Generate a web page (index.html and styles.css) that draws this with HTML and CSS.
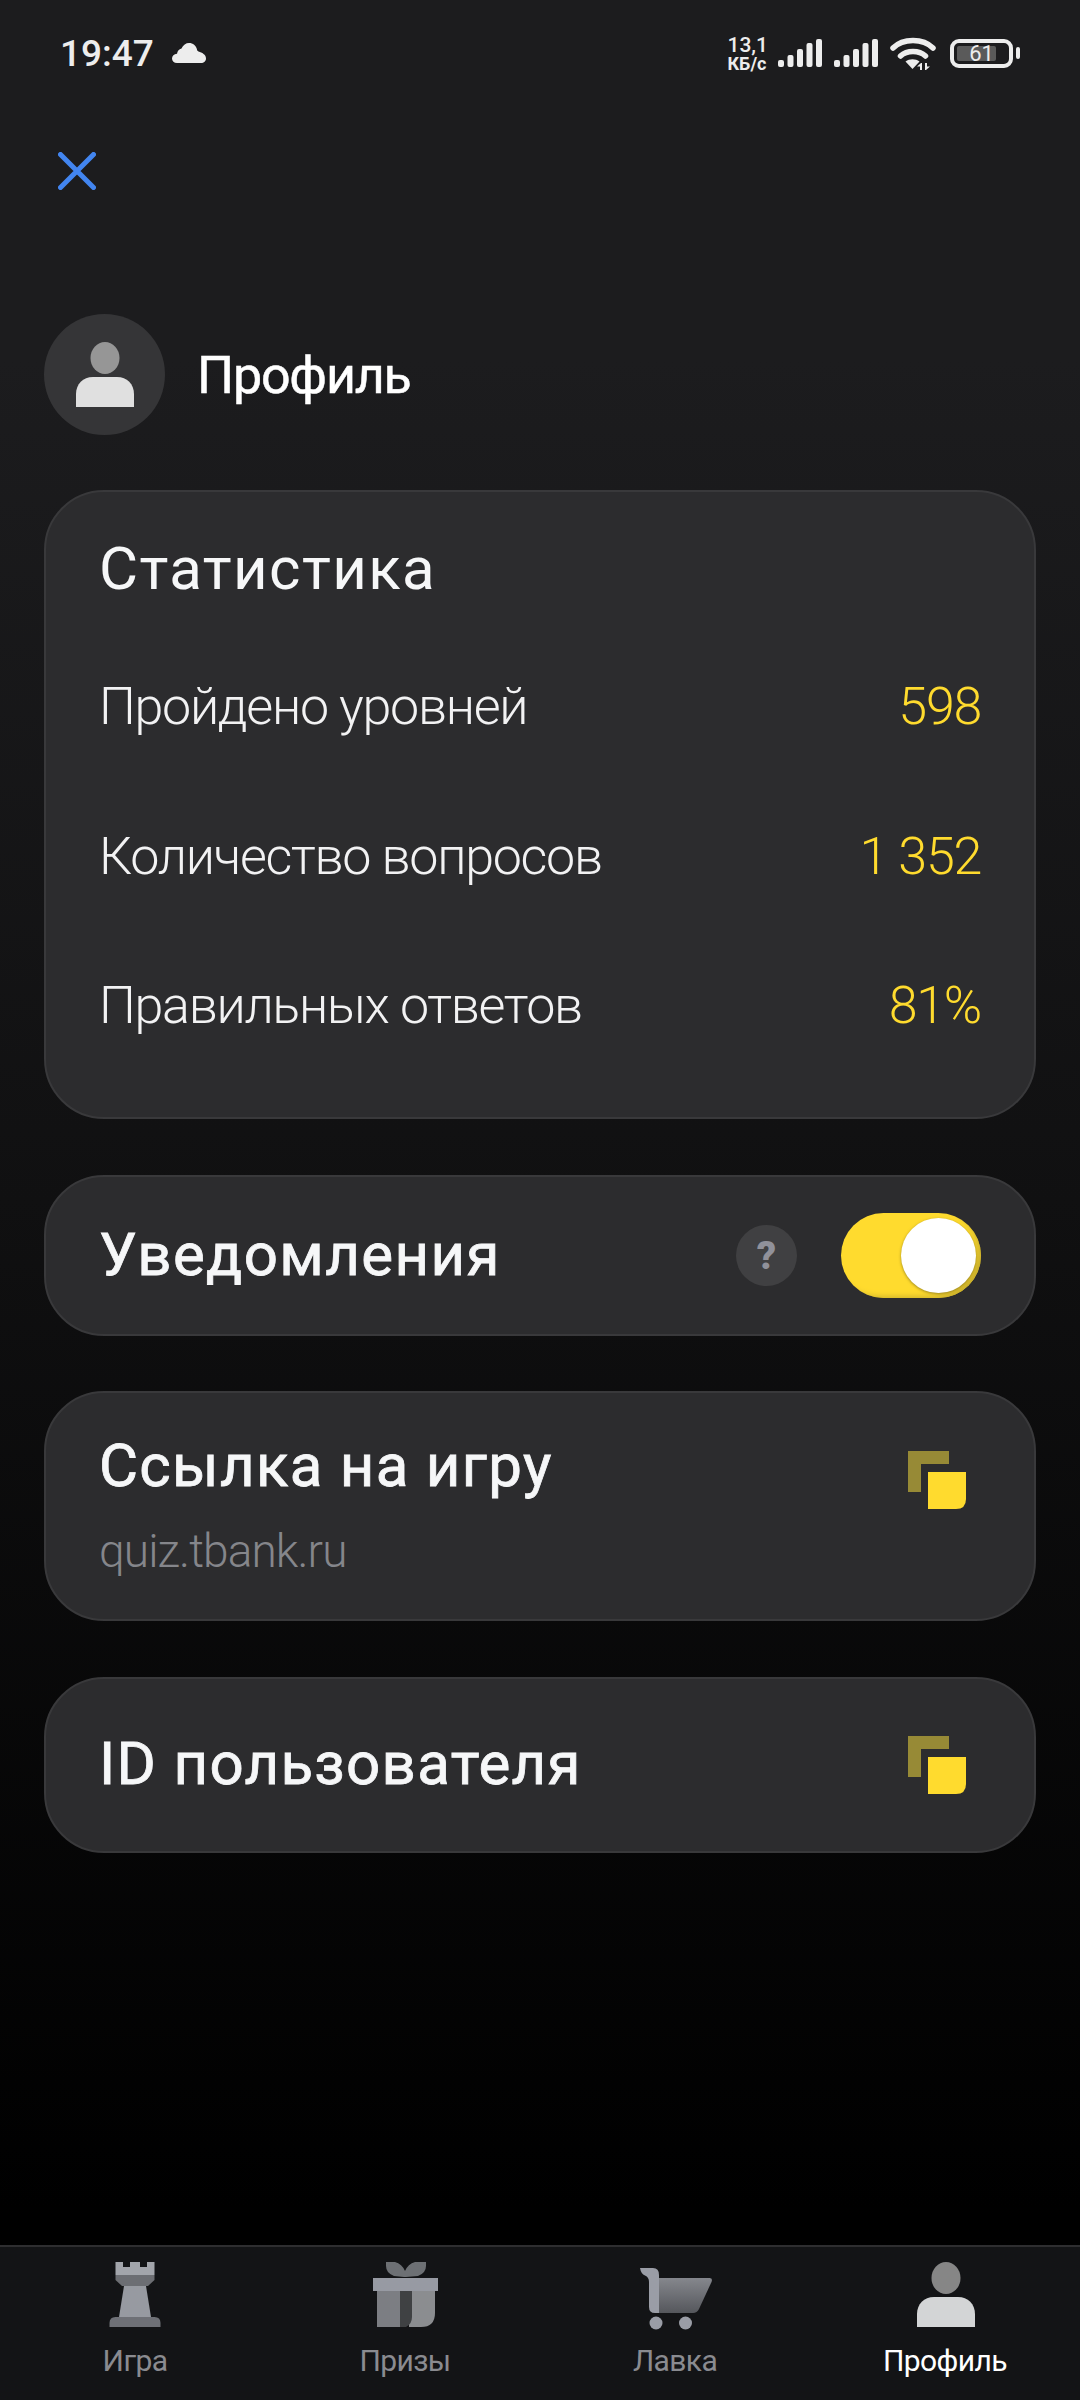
FILE: index.html
```html
<!DOCTYPE html>
<html lang="ru">
<head>
    <meta charset="UTF-8">
    <meta name="viewport" content="width=device-width, initial-scale=1.0">
    <title>Профиль</title>
    <link rel="stylesheet" href="styles.css">
</head>
<body>
    <div class="status-bar">
        <div class="status-left">
            <span class="status-time">19:47</span>
            <svg class="cloud" width="34" height="20" viewBox="0 0 34 20"><path d="M5 20C2 20 0 18 0 15.500c0-2.500 2-4.500 5-4.700C5.500 8 7 6 9.500 5.500 11 2 14 0 17 0c4 0 7 2.500 8 6.500 .2 1 .5 1.500 1.500 2C30 9.500 34 11.500 34 15.500c0 2.500-2 4.500-5 4.500z" fill="#ededed"/></svg>
        </div>
        <div class="status-right">
            <div class="net-speed"><span class="net-value">13,1</span><span class="net-unit">КБ/с</span></div>
            <svg class="signal" width="44" height="28" viewBox="0 0 44 28"><g fill="#ededed"><rect x="0" y="21" width="6" height="7" rx="2"/><rect x="9.500" y="16" width="6" height="12" rx="2"/><rect x="19" y="10" width="6" height="18" rx="2"/><rect x="28.500" y="4" width="6" height="24" rx="2"/><rect x="38" y="0" width="6" height="28" rx="2"/></g></svg>
            <svg class="signal" width="44" height="28" viewBox="0 0 44 28"><g fill="#ededed"><rect x="0" y="21" width="6" height="7" rx="2"/><rect x="9.500" y="16" width="6" height="12" rx="2"/><rect x="19" y="10" width="6" height="18" rx="2"/><rect x="28.500" y="4" width="6" height="24" rx="2"/><rect x="38" y="0" width="6" height="28" rx="2"/></g></svg>
            <svg class="wifi" width="46" height="33" viewBox="0 0 46 33"><g fill="none" stroke="#ededed" stroke-width="5.500" stroke-linecap="round"><path d="M3 11C13 1 33 1 43 11"/><path d="M10.500 19C17 13 29 13 35.500 19"/></g><path d="M15.500 24.500c4-3 10-3 14 0L22.500 32z" fill="#ededed"/><path d="M31 26l-4 3.500h3V33h2v-7zM36 33l4-3.500h-3V26h-2v7z" fill="#ededed"/></svg>
            <div class="battery">
                <div class="battery-body">
                    <div class="battery-fill"></div>
                    <span class="battery-num">61</span>
                </div>
                <div class="battery-nub"></div>
            </div>
        </div>
    </div>

    <main class="content">
        <svg class="close-icon" width="38" height="38" viewBox="0 0 38 38"><path d="M2.500 2.500L35.500 35.500M35.500 2.500L2.500 35.500" stroke="#4285f0" stroke-width="5" stroke-linecap="round"/></svg>

        <div class="profile-head">
            <div class="avatar">
                <svg width="58" height="65" viewBox="0 0 58 65"><ellipse cx="29" cy="16" rx="14.500" ry="16" fill="#969696"/><path d="M0 65V52C0 42 7 35 17 35H41C51 35 58 42 58 52V65z" fill="#e0e0e0"/></svg>
            </div>
            <span class="profile-name">Профиль</span>
        </div>

        <section class="card stats-card">
            <h2 class="card-title">Статистика</h2>
            <div class="stat-row"><span>Пройдено уровней</span><span class="stat-value">598</span></div>
            <div class="stat-row"><span>Количество вопросов</span><span class="stat-value">1 352</span></div>
            <div class="stat-row"><span>Правильных ответов</span><span class="stat-value">81%</span></div>
        </section>

        <section class="card notify-card">
            <h2 class="card-title notify-title">Уведомления</h2>
            <div class="help-badge">?</div>
            <div class="toggle"><div class="toggle-knob"></div></div>
        </section>

        <section class="card link-card">
            <div>
                <h2 class="card-title">Ссылка на игру</h2>
                <div class="link-text">quiz.tbank.ru</div>
            </div>
            <svg class="copy-icon" width="58" height="58" viewBox="0 0 58 58"><path d="M0 0H41V13H13V41H0z" fill="#978a36"/><path d="M20 21H58V48Q58 58 48 58H20z" fill="#ffdb2e"/></svg>
        </section>

        <section class="card id-card">
            <h2 class="card-title">ID пользователя</h2>
            <svg class="copy-icon" width="58" height="58" viewBox="0 0 58 58"><path d="M0 0H41V13H13V41H0z" fill="#978a36"/><path d="M20 21H58V48Q58 58 48 58H20z" fill="#ffdb2e"/></svg>
        </section>
    </main>

    <nav class="tabbar">
        <div class="tab">
            <svg width="72" height="66" viewBox="0 0 72 66">
                <path d="M16.500 0H24V5H31V0H41V5H48V0H55.500V13H16.500z" fill="#a2a5ab"/>
                <path d="M16.500 13H55.500V18L49 24H23L16.500 18z" fill="#6c6e73"/>
                <path d="M25 24H47L52 55H20z" fill="#979aa1"/>
                <path d="M10.500 65V61Q10.500 55 16.500 55H55.500Q61.500 55 61.500 61V65z" fill="#6e7076"/>
            </svg>
            <span class="tab-label">Игра</span>
        </div>
        <div class="tab">
            <svg width="72" height="66" viewBox="0 0 72 66">
                <path d="M17 0H26Q33 2 36 9 39 2 46 0H57V4Q57 11 49 14L37 15 35 15 25 14Q17 11 17 4z" fill="#6d7074"/>
                <rect x="4" y="16" width="65" height="13" fill="#979aa3"/>
                <rect x="8" y="29" width="26" height="36" fill="#7c7e83"/>
                <path d="M40 29H66V51Q66 65 52 65H40z" fill="#8b8d90"/>
                <path d="M31 29H43V55Q43 62 37 65H31z" fill="#3f4143"/>
            </svg>
            <span class="tab-label">Призы</span>
        </div>
        <div class="tab">
            <svg class="cart" width="74" height="66" viewBox="0 0 74 66">
                <defs><linearGradient id="cartFill" x1="0" y1="0" x2="0" y2="1"><stop offset="0" stop-color="#85878d"/><stop offset="1" stop-color="#55575c"/></linearGradient></defs>
                <path d="M20 16H71.500Q75 16 73.500 20L61 47Q59 51 55 51H20z" fill="url(#cartFill)"/>
                <path d="M2 6H15Q21 6 21 13V51H17Q11 51 11 45V20Q11 15 7 13.500 3 12 2 6z" fill="#9a9da6"/>
                <circle cx="18" cy="61" r="6.500" fill="#9a9da6"/>
                <circle cx="47.500" cy="61" r="6.500" fill="#9a9da6"/>
            </svg>
            <span class="tab-label">Лавка</span>
        </div>
        <div class="tab tab-active">
            <svg width="72" height="66" viewBox="0 0 72 66"><ellipse cx="37" cy="16" rx="14.500" ry="16" fill="#868686"/><path d="M8 65V52C8 42 15 35 25 35H49C59 35 66 42 66 52V65z" fill="#d3d5d6"/></svg>
            <span class="tab-label">Профиль</span>
        </div>
    </nav>
</body>
</html>
```

FILE: styles.css
```css
* {
    box-sizing: border-box;
}
html, body {
    margin: 0;
    padding: 0;
}
body {
    width: 1080px;
    height: 2400px;
    display: flex;
    flex-direction: column;
    font-family: Roboto, "Noto Sans", sans-serif;
    color: white;
    background: linear-gradient(180deg, #1c1c1e 0%, #1c1c1e 15%, #101011 50%, #000 92%);
}

/* status bar */
.status-bar {
    height: 106px;
    flex: none;
    display: flex;
    justify-content: space-between;
    align-items: center;
    padding: 0 60px;
}
.status-left {
    display: flex;
    align-items: center;
    gap: 18px;
}
.status-time {
    font-size: 37px;
    font-weight: 500;
    color: #ededed;
}
.status-right {
    display: flex;
    align-items: center;
    gap: 12px;
}
.net-speed {
    display: flex;
    flex-direction: column;
    font-weight: 700;
    color: #ededed;
    margin-right: -2px;
}
.net-value {
    font-size: 21px;
    line-height: 20px;
    font-weight: 500;
}
.net-unit {
    font-size: 18px;
    line-height: 17px;
}
.battery {
    display: flex;
    align-items: center;
    gap: 3px;
    margin-left: 2px;
}
.battery-body {
    width: 63px;
    height: 29px;
    border: 4px solid #ededed;
    border-radius: 9px;
    padding: 3px;
    display: flex;
    position: relative;
}
.battery-fill {
    width: 39px;
    background: #5a5a5a;
    border-radius: 2px;
}
.battery-num {
    position: absolute;
    left: 0;
    right: 0;
    top: -4px;
    text-align: center;
    font-size: 22px;
    line-height: 29px;
    color: #ededed;
}
.battery-nub {
    width: 4px;
    height: 12px;
    background: #ededed;
    border-radius: 2px;
}

/* page content */
.content {
    flex: 1;
    padding: 46px 44px 0;
}
.close-icon {
    display: block;
    margin-left: 14px;
}
.profile-head {
    display: flex;
    align-items: center;
    gap: 32px;
    margin-top: 124px;
}
.avatar {
    width: 121px;
    height: 121px;
    border-radius: 50%;
    background: #353537;
    display: flex;
    align-items: center;
    justify-content: center;
}
.profile-name {
    font-size: 52px;
    letter-spacing: -1.2px;
    padding-top: 2px;
    -webkit-text-stroke: 0.5px #fff;
}

.card {
    background: #2c2c2e;
    border: 2px solid #39393b;
    border-radius: 60px;
    padding: 0 53px;
}
.card-title {
    margin: 0;
    font-size: 60px;
    font-weight: 400;
    letter-spacing: 1.4px;
    color: #f6f7f8;
    white-space: nowrap;
}
.stats-card {
    margin-top: 55px;
    height: 629px;
    padding-top: 43px;
}
.stats-card .card-title {
    line-height: 68px;
    margin-bottom: 29px;
}
.stat-row {
    display: flex;
    justify-content: space-between;
    align-items: center;
    height: 149.500px;
    font-size: 52px;
    font-weight: 300;
    letter-spacing: -1.3px;
    color: #f2f2f3;
}
.stat-value {
    color: #ffdb2e;
}

.notify-card {
    margin-top: 56px;
    height: 161px;
    display: flex;
    align-items: center;
}
.notify-title {
    flex: 1;
    padding-bottom: 3px;
    -webkit-text-stroke: 0.8px #f6f7f8;
}
.help-badge {
    width: 61px;
    height: 61px;
    border-radius: 50%;
    background: #404042;
    color: #90919a;
    font-size: 38px;
    font-weight: 900;
    display: flex;
    align-items: center;
    justify-content: center;
    margin-right: 44px;
}
.toggle {
    width: 140px;
    height: 85px;
    border-radius: 43px;
    background: #ffdb2e;
    display: flex;
    align-items: center;
    justify-content: flex-end;
    padding-right: 5px;
    box-shadow: inset -6px -4px 6px -3px #c4ab2c;
}
.toggle-knob {
    width: 75px;
    height: 75px;
    border-radius: 50%;
    background: #fff;
    box-shadow: 0 1px 3px rgba(90, 80, 20, 0.6);
}

.link-card {
    margin-top: 55px;
    height: 230px;
    display: flex;
    justify-content: space-between;
    padding-top: 39px;
}
.link-card .card-title, .id-card .card-title {
    letter-spacing: 1.3px;
    -webkit-text-stroke: 0.8px #f6f7f8;
}
.link-card .card-title {
    line-height: 68px;
}
.link-text {
    font-size: 46px;
    font-weight: 300;
    letter-spacing: -0.9px;
    color: #85868b;
    margin-top: 24px;
}
.copy-icon {
    flex: none;
    margin-top: 19px;
    margin-right: 15px;
}
.id-card {
    margin-top: 56px;
    height: 176px;
    display: flex;
    justify-content: space-between;
    align-items: center;
}
.id-card .card-title {
    padding-bottom: 4px;
}
.id-card .copy-icon {
    margin-top: 0;
}

/* bottom tabs */
.tabbar {
    flex: none;
    height: 155px;
    background: #131416;
    border-top: 2px solid #2e2e30;
    display: grid;
    grid-template-columns: repeat(4, 270px);
}
.tab {
    display: flex;
    flex-direction: column;
    align-items: center;
    padding-top: 15px;
    color: #8a8b90;
}
.tab svg {
    display: block;
    overflow: visible;
}
.tab-label {
    font-size: 30px;
    line-height: 36px;
    margin-top: 15px;
    letter-spacing: -0.6px;
}
.tab-active {
    color: #fff;
}
```
